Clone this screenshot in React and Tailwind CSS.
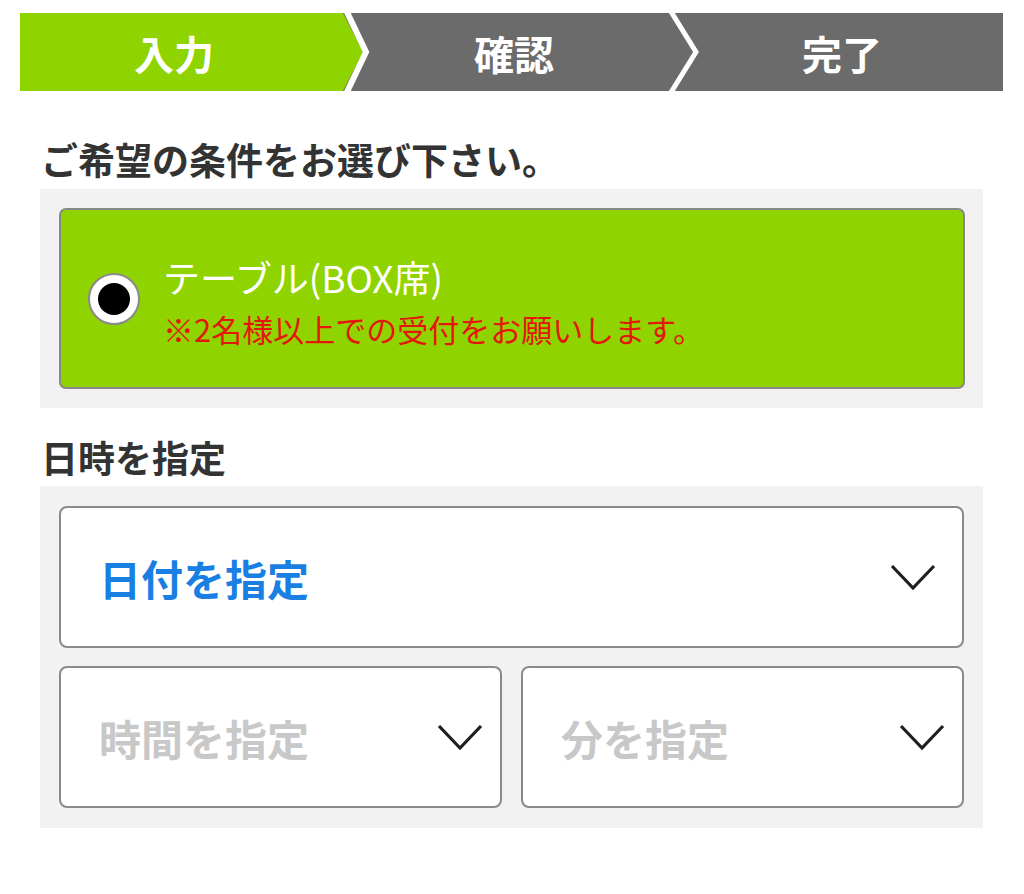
const font = { fontFamily: '"Noto Sans CJK JP", "Noto Sans", sans-serif' };

function StepBar() {
  return (
    <div className="relative h-[78px] w-[983px]">
      <svg className="absolute inset-0" width="983" height="78" viewBox="0 0 983 78">
        <rect x="0" y="0" width="983" height="78" fill="#6b6b6b" />
        <polygon points="0,0 323,0 343,39 323,78 0,78" fill="#8fd300" />
        <polyline points="326,-3 346,39 326,81" fill="none" stroke="#ffffff" strokeWidth="6" />
        <polyline points="650,-3 676,39 650,81" fill="none" stroke="#ffffff" strokeWidth="5" />
      </svg>
      <div className="relative flex h-full items-center pt-[2px] text-[40px] font-bold text-white">
        <div className="w-[308px] text-center">入力</div>
        <div className="w-[372px] text-center">確認</div>
        <div className="w-[284px] text-center">完了</div>
      </div>
    </div>
  );
}

function Chevron() {
  return (
    <svg width="46" height="28" viewBox="0 0 46 28">
      <polyline points="2,3 23,25 44,3" fill="none" stroke="#1e1e1e" strokeWidth="3.2" />
    </svg>
  );
}

function SelectBox({ label, placeholder, className, padRight }) {
  return (
    <div
      className={`flex items-center justify-between rounded-[8px] border-2 border-[#8a8a8a] bg-white pl-[38px] ${padRight} ${className}`}
    >
      <span className={`text-[42px] font-bold ${placeholder ? "text-[#c8c8c8]" : "text-[#1a7fe2]"}`}>{label}</span>
      <Chevron />
    </div>
  );
}

export default function App() {
  return (
    <div className="min-h-[894px] bg-white px-[20px] pt-[13px]" style={font}>
      <StepBar />

      <h2 className="mt-[48px] pl-[21px] text-[37px] leading-[40px] font-bold text-[#333333]">
        ご希望の条件をお選び下さい。
      </h2>
      <div className="mt-[10px] ml-[20px] w-[943px] bg-[#f2f2f2] p-[19px] pr-[18px]">
        <div className="flex h-[181px] items-center rounded-[7px] border-2 border-[#888888] bg-[#8fd300] pl-[27px]">
          <div className="flex h-[52px] w-[52px] items-center justify-center rounded-full border-2 border-[#8a8a8a] bg-white">
            <div className="h-[32px] w-[32px] rounded-full bg-black" />
          </div>
          <div className="ml-[23px] pt-[6px]">
            <div className="text-[37px] leading-[54px] text-white">テーブル(BOX席)</div>
            <div className="text-[31px] leading-[50px] text-[#e3170a]">※2名様以上での受付をお願いします。</div>
          </div>
        </div>
      </div>

      <h2 className="mt-[29px] pl-[21px] text-[37px] leading-[40px] font-bold text-[#333333]">日時を指定</h2>
      <div className="mt-[9px] ml-[20px] w-[943px] bg-[#f2f2f2] py-[20px] pl-[19px] pr-[19px]">
        <SelectBox label="日付を指定" className="h-[142px]" padRight="pr-[26px]" />
        <div className="mt-[18px] flex gap-[19px]">
          <SelectBox label="時間を指定" placeholder className="h-[142px] flex-1" padRight="pr-[17px]" />
          <SelectBox label="分を指定" placeholder className="h-[142px] flex-1" padRight="pr-[17px]" />
        </div>
      </div>
    </div>
  );
}
